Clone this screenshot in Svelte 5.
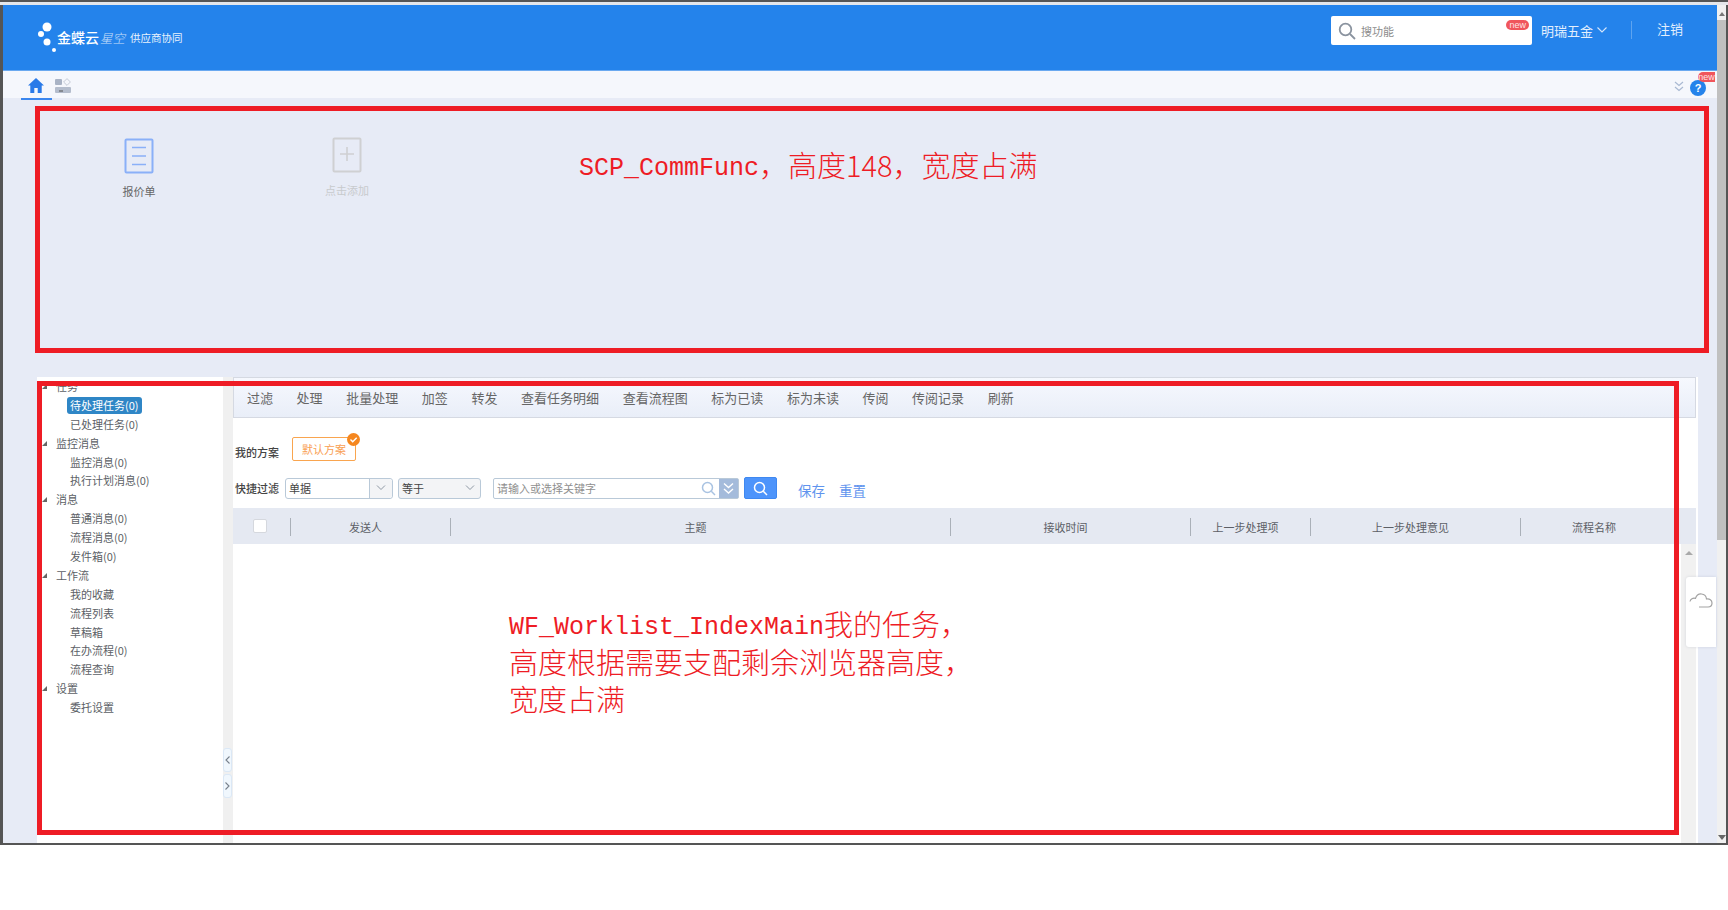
<script>
  const tree = [
    { label: "任务", items: ["待处理任务(0)", "已处理任务(0)"] },
    { label: "监控消息", items: ["监控消息(0)", "执行计划消息(0)"] },
    { label: "消息", items: ["普通消息(0)", "流程消息(0)", "发件箱(0)"] },
    { label: "工作流", items: ["我的收藏", "流程列表", "草稿箱", "在办流程(0)", "流程查询"] },
    { label: "设置", items: ["委托设置"] }
  ];
  const actions = ["过滤", "处理", "批量处理", "加签", "转发", "查看任务明细", "查看流程图", "标为已读", "标为未读", "传阅", "传阅记录", "刷新"];
  const columns = [
    { label: "发送人", width: 160 },
    { label: "主题", width: 500 },
    { label: "接收时间", width: 240 },
    { label: "上一步处理项", width: 120 },
    { label: "上一步处理意见", width: 210 },
    { label: "流程名称", width: 158 }
  ];
</script>

<div class="app">
  <div class="topline"></div>
  <div class="window">
    <div class="page">
      <header class="header">
        <div class="logo">
          <svg width="30" height="36" viewBox="0 0 30 36" fill="#fff">
            <circle cx="16" cy="8" r="4.5" />
            <circle cx="10" cy="15" r="3" />
            <circle cx="16" cy="23" r="3.5" />
            <circle cx="23" cy="31" r="2" />
          </svg>
          <b>金蝶云</b>
          <i>星空</i>
          <span>供应商协同</span>
        </div>
        <div class="search">
          <svg width="18" height="18" viewBox="0 0 18 18" fill="none" stroke="#8a939f" stroke-width="1.8">
            <circle cx="7.5" cy="7.5" r="5.8" />
            <path d="M12 12l5 5" />
          </svg>
          <span>搜功能</span>
          <em class="new">new</em>
        </div>
        <div class="user">
          明瑞五金
          <svg width="10" height="6" viewBox="0 0 10 6" fill="none" stroke="#d5e6fb" stroke-width="1.1"><path d="M.5.5L5 5 9.500 .5" /></svg>
        </div>
        <div class="logout">注销</div>
      </header>

      <nav class="tabs">
        <div class="tab active">
          <svg width="16" height="15" viewBox="0 0 16 15" fill="#2a7ae8">
            <path d="M8 0L0 7.500h2.300V15h4V10h3.400v5h4V7.500H16z" />
          </svg>
        </div>
        <div class="tab">
          <svg width="16" height="15" viewBox="0 0 16 15">
            <rect x="0" y="1" width="7" height="6" rx="1" fill="#a9b3c5" />
            <path d="M12 .6l3.400 3.400L12 7.400 8.600 4z" fill="none" stroke="#c4cad6" />
            <rect x="0" y="9" width="16" height="6" rx="1" fill="#b4bdcd" />
            <path d="M4 13h4" stroke="#555" />
          </svg>
        </div>
        <div class="tab-tools">
          <svg class="fold" width="10" height="11" viewBox="0 0 10 11" fill="none" stroke="#a9b9d2" stroke-width="1.2"><path d="M1 1l4 3.500L9 1M1 6l4 3.500L9 6" /></svg>
          <div class="help">?<em class="new">new</em></div>
        </div>
      </nav>

      <div class="content">
        <section class="quick">
          <div class="entry">
            <svg width="30" height="36" viewBox="0 0 30 36" fill="none" stroke="#8ab0f8" stroke-width="2">
              <rect x="1.500" y="1.500" width="27" height="33" rx="1" />
              <path d="M8 9.500h14M8 18h14M8 26.500h14" stroke-width="1.600" />
            </svg>
            <span>报价单</span>
          </div>
          <div class="entry add">
            <svg width="30" height="36" viewBox="0 0 30 36" fill="none" stroke="#cfd0d2" stroke-width="2">
              <rect x="1.500" y="1.500" width="27" height="33" rx="1" />
              <path d="M8 17h14M15 10v14" stroke-width="1.600" />
            </svg>
            <span>点击添加</span>
          </div>
        </section>

        <section class="work">
          <aside class="sidebar">
            {#each tree as group}
              <div class="group"><i class="arrow"></i>{group.label}</div>
              {#each group.items as item, n}
                <div class="leaf"><span class:selected={group.label === "任务" && n === 0}>{item}</span></div>
              {/each}
            {/each}
          </aside>

          <div class="splitter">
            <button aria-label="收起">
              <svg width="5" height="8" viewBox="0 0 5 8" fill="none" stroke="#77808c" stroke-width="1.100"><path d="M4.500.5L1 4l3.500 3.500" /></svg>
            </button>
            <button aria-label="展开">
              <svg width="5" height="8" viewBox="0 0 5 8" fill="none" stroke="#77808c" stroke-width="1.100"><path d="M.5.5L4 4 .5 7.500" /></svg>
            </button>
          </div>

          <div class="main">
            <div class="toolbar">
              {#each actions as action}
                <span>{action}</span>
              {/each}
            </div>

            <div class="schemes">
              <label for="scheme">我的方案</label>
              <div class="chip" id="scheme">
                默认方案
                <svg class="tick" width="13" height="13" viewBox="0 0 13 13">
                  <circle cx="6.500" cy="6.500" r="6.500" fill="#f5871f" />
                  <path d="M3.500 6.500l2.200 2.200 4-4" fill="none" stroke="#fff" stroke-width="1.400" />
                </svg>
              </div>
            </div>

            <div class="filter">
              <span class="filter-label">快捷过滤</span>
              <div class="field doc">
                <span>单据</span>
                <div class="caret"><svg width="10" height="6" viewBox="0 0 10 6" fill="none" stroke="#8d97a3"><path d="M1 .5l4 4 4-4" /></svg></div>
              </div>
              <div class="field op">
                <span>等于</span>
                <svg width="10" height="6" viewBox="0 0 10 6" fill="none" stroke="#8d97a3"><path d="M1 .5l4 4 4-4" /></svg>
              </div>
              <div class="field keyword">
                <span>请输入或选择关键字</span>
                <svg width="15" height="15" viewBox="0 0 15 15" fill="none" stroke="#a9c3e2" stroke-width="1.500"><circle cx="6.500" cy="6.500" r="5" /><path d="M10.300 10.300L14 14" /></svg>
                <div class="more"><svg width="11" height="13" viewBox="0 0 11 13" fill="none" stroke="#fff" stroke-width="1.400"><path d="M1 1.500l4.500 4 4.500-4M1 7l4.500 4 4.500-4" /></svg></div>
              </div>
              <button class="go" aria-label="搜索">
                <svg width="15" height="15" viewBox="0 0 15 15" fill="none" stroke="#fff" stroke-width="1.500"><circle cx="6.500" cy="6.500" r="5" /><path d="M10.300 10.300L14 14" /></svg>
              </button>
              <a class="link save" href="#save">保存</a>
              <a class="link" href="#reset">重置</a>
            </div>

            <div class="thead">
              <div class="check"><i></i></div>
              {#each columns as col}
                <div class="th" style="width: {col.width}px">{col.label}</div>
              {/each}
            </div>

            <div class="tbody">
              <div class="vbar"><i class="up"></i></div>
            </div>
          </div>
        </section>
      </div>

      <div class="cloud">
        <svg width="24" height="15" viewBox="0 0 24 15" fill="none" stroke="#a3a3a3" stroke-width="1.200">
          <path d="M1 8.500C1.500 6 3.800 4.700 6.500 5.400 7.500 2.200 10 .8 12.500 1c2.800.2 4.700 2.300 5 5 3-.6 5.500 1.200 5.500 4 0 2.500-1.800 4-4 4H10" />
        </svg>
      </div>
    </div>

    <div class="vscroll">
      <i class="up"></i>
      <div class="thumb"></div>
      <i class="down"></i>
    </div>
  </div>

  <div class="mark mark-top"></div>
  <div class="mark mark-bottom"></div>
  <p class="note note-top"><span>SCP_CommFunc</span>，高度148，宽度占满</p>
  <p class="note note-bottom"><span>WF_Worklist_IndexMain</span>我的任务，<br />高度根据需要支配剩余浏览器高度，<br />宽度占满</p>
</div>

<style>
  :global(body) {
    background: #fff;
    overflow: hidden;
  }

  .app {
    position: relative;
    height: 910px;
    font-family: "Noto Sans CJK SC", "Liberation Sans", sans-serif;
    font-size: 11px;
    color: #5c5f66;
  }

  .topline {
    height: 3px;
    border-top: 2px solid #555;
    background: #e4e6ea;
  }

  .window {
    display: flex;
    height: 838px;
    border-left: 3px solid #555;
    border-right: 2px solid #555;
    border-bottom: 2px solid #555;
  }

  .page {
    position: relative;
    flex: 1;
    display: flex;
    flex-direction: column;
    min-width: 0;
    background: #e7ebf6;
  }

  .header {
    height: 66px;
    flex-shrink: 0;
    display: flex;
    align-items: flex-start;
    background: #2483eb;
    color: #e3effd;
    font-size: 13px;
    border-bottom: 1px solid #6aa9f0;
    box-sizing: border-box;
  }

  .logo {
    display: flex;
    align-items: center;
    flex: 1;
    padding: 14px 0 0 28px;
    color: #fff;
  }

  .logo svg {
    margin-right: -4px;
  }

  .logo b {
    font-size: 14px;
    font-weight: 500;
  }

  .logo i {
    font-size: 12.500px;
    margin-left: 1px;
    opacity: 0.75;
    font-weight: 300;
  }

  .logo span {
    font-size: 10.500px;
    margin-left: 5px;
    opacity: 0.9;
  }

  .search {
    position: relative;
    width: 201px;
    height: 29px;
    margin-top: 11px;
    box-sizing: border-box;
    padding-left: 7px;
    display: flex;
    align-items: center;
    gap: 5px;
    background: #fff;
    border-radius: 2px;
    color: #8c8c8c;
    font-size: 11px;
  }

  .new {
    position: absolute;
    background: #f0565c;
    color: #fde5e5;
    border-radius: 6px;
    font-family: "Liberation Sans", sans-serif;
    font-style: normal;
    font-size: 9px;
    line-height: 10px;
    height: 10px;
    padding: 0 3px;
  }

  .search .new {
    top: 4px;
    right: 3px;
  }

  .user {
    display: flex;
    align-items: center;
    gap: 4px;
    height: 18px;
    margin: 16px 0 0 9px;
    width: 90px;
    border-right: 1px solid #5ea4f0;
  }

  .logout {
    margin: 14px 34px 0 25px;
  }

  .tabs {
    height: 27px;
    flex-shrink: 0;
    display: flex;
    padding-left: 18px;
    background: #f5f7fc;
  }

  .tab {
    width: 31px;
    height: 29px;
    box-sizing: border-box;
    padding: 7px 0 0 3px;
    flex-shrink: 0;
    position: relative;
    z-index: 1;
  }

  .tab.active {
    border-bottom: 2px solid #3b86ee;
    padding-left: 7px;
  }

  .tab-tools {
    margin-left: auto;
    display: flex;
    align-items: center;
    gap: 6px;
    padding: 7px 11px 0 0;
  }

  .fold {
    margin-top: -4px;
  }

  .help {
    position: relative;
    width: 16px;
    height: 16px;
    border-radius: 50%;
    background: #2483eb;
    color: #fff;
    font-family: "Liberation Sans", sans-serif;
    font-weight: bold;
    font-size: 11px;
    line-height: 16px;
    text-align: center;
  }

  .help .new {
    top: -8px;
    left: 8px;
    width: 17px;
    padding: 0;
    border-radius: 5px 0 0 5px;
    font-weight: normal;
  }

  .content {
    flex: 1;
    min-height: 0;
    display: flex;
    flex-direction: column;
    padding: 0 19px 0 32px;
  }

  .quick {
    height: 279px;
    flex-shrink: 0;
    box-sizing: border-box;
    display: flex;
    padding-top: 40px;
  }

  .entry {
    width: 208px;
    display: flex;
    flex-direction: column;
    align-items: center;
    gap: 9px;
    color: #666;
  }

  .entry.add {
    color: #c8cacd;
    margin-top: -1px;
  }

  .work {
    flex: 1;
    min-height: 0;
    display: flex;
    margin-left: 2px;
    background: #fff;
  }

  .sidebar {
    width: 186px;
    flex-shrink: 0;
    box-sizing: border-box;
    color: #5c5f66;
    overflow: hidden;
  }

  .group,
  .leaf {
    height: 18.900px;
    line-height: 18.900px;
  }

  .group {
    position: relative;
    padding-left: 19px;
  }

  .arrow {
    position: absolute;
    left: 5px;
    top: 7px;
    width: 0;
    height: 0;
    border-style: solid;
    border-width: 0 0 5px 5px;
    border-color: transparent transparent #666 transparent;
  }

  .leaf {
    padding-left: 30px;
  }

  .leaf span {
    display: inline-block;
    padding: 0 3px;
    line-height: 17px;
    vertical-align: top;
    margin-top: 1px;
  }

  .leaf .selected {
    background: #2f86c6;
    color: #fff;
    border-radius: 3px;
  }

  .splitter {
    width: 10px;
    flex-shrink: 0;
    background: #f0f0f0;
    display: flex;
    flex-direction: column;
    gap: 2px;
    padding-top: 371px;
    box-sizing: border-box;
  }

  .splitter button {
    width: 9px;
    height: 24px;
    padding: 0;
    display: flex;
    align-items: center;
    justify-content: center;
    background: #f0f7fd;
    border: 1px solid #dbe8f6;
    border-radius: 3px;
  }

  .main {
    flex: 1;
    min-width: 0;
    display: flex;
    flex-direction: column;
    margin-right: 2px;
  }

  .toolbar {
    height: 41px;
    flex-shrink: 0;
    box-sizing: border-box;
    display: flex;
    align-items: center;
    gap: 23.600px;
    padding: 0 0 1px 13px;
    background: linear-gradient(#f6f8fe, #e9eef8);
    border: 1px solid #d5d9e2;
    font-size: 13px;
    color: #666;
  }

  .schemes {
    display: flex;
    height: 24px;
    margin-top: 19px;
    padding-left: 2px;
    color: #444;
    font-weight: 500;
  }

  .schemes label {
    width: 57px;
    padding-top: 6px;
    line-height: 18px;
  }

  .chip {
    position: relative;
    width: 64px;
    box-sizing: border-box;
    border: 1px solid #f9a54f;
    border-radius: 2px;
    text-align: center;
    line-height: 22px;
    color: #f9a054;
    font-weight: 400;
  }

  .tick {
    position: absolute;
    top: -5px;
    right: -5px;
  }

  .filter {
    display: flex;
    align-items: center;
    height: 22px;
    margin-top: 16px;
    padding-left: 2px;
  }

  .filter-label {
    width: 50px;
    color: #444;
    font-weight: 500;
  }

  .field {
    height: 21px;
    box-sizing: border-box;
    display: flex;
    align-items: center;
    border: 1px solid #b9c9d8;
    border-radius: 3px;
    padding-left: 3px;
    color: #444;
  }

  .doc {
    width: 108px;
  }

  .doc span {
    flex: 1;
  }

  .caret {
    width: 22px;
    height: 100%;
    display: flex;
    align-items: center;
    justify-content: center;
    background: #f3f4f6;
    border-left: 1px solid #b9c9d8;
    border-radius: 0 3px 3px 0;
  }

  .op {
    width: 83px;
    margin-left: 5px;
    justify-content: space-between;
    padding-right: 5px;
    background: #f3f4f6;
  }

  .keyword {
    width: 246px;
    margin-left: 12px;
    border-radius: 2px;
    color: #8f8f8f;
  }

  .keyword span {
    flex: 1;
  }

  .more {
    width: 19px;
    height: 100%;
    margin-left: 3px;
    display: flex;
    align-items: center;
    justify-content: center;
    background: #a4bbdb;
  }

  .go {
    width: 33px;
    height: 22px;
    margin-left: 5px;
    padding: 0;
    display: flex;
    align-items: center;
    justify-content: center;
    background: #4d94fb;
    border: 1px solid #3f88f0;
    border-radius: 2px;
  }

  .link {
    margin-left: 14px;
    padding-top: 3px;
    font-size: 13.500px;
    color: #5f94ee;
    text-decoration: none;
  }

  .link.save {
    margin-left: 21px;
  }

  .thead {
    height: 36px;
    flex-shrink: 0;
    margin-top: 9px;
    display: flex;
    align-items: center;
    background: #e5e9f2;
  }

  .check {
    width: 57px;
    flex-shrink: 0;
    box-sizing: border-box;
    padding-left: 20px;
  }

  .check i {
    display: block;
    width: 14px;
    height: 14px;
    box-sizing: border-box;
    background: #fff;
    border: 1px solid #d5d8de;
    border-radius: 2px;
  }

  .th {
    flex-shrink: 0;
    height: 18px;
    box-sizing: border-box;
    padding-right: 10px;
    margin-top: 1px;
    line-height: 18px;
    text-align: center;
    border-left: 1px solid #aab0b8;
  }

  .th:last-child {
    border-right: 1px solid #d5d8de;
  }

  .tbody {
    flex: 1;
    min-height: 0;
    display: flex;
    justify-content: flex-end;
  }

  .vbar {
    width: 15px;
    background: #f1f1f1;
    display: flex;
    justify-content: center;
  }

  .up,
  .down {
    display: block;
    width: 0;
    height: 0;
    border-style: solid;
    border-color: transparent;
  }

  .up {
    border-width: 0 4px 4px 4px;
    border-bottom-color: #a9a9a9;
  }

  .vbar .up {
    margin-top: 7px;
  }

  .cloud {
    position: absolute;
    right: 1px;
    top: 572px;
    width: 30px;
    height: 70px;
    box-sizing: border-box;
    padding: 16px 0 0 3px;
    background: #fff;
    border-radius: 3px 0 0 3px;
    box-shadow: 0 0 3px rgba(120, 130, 150, 0.25);
  }

  .vscroll {
    width: 9px;
    flex-shrink: 0;
    display: flex;
    flex-direction: column;
    align-items: center;
    background: #f0f0f0;
  }

  .vscroll .up {
    margin-top: 7px;
    border-width: 0 3.500px 4px 3.500px;
    border-bottom-color: #777;
  }

  .thumb {
    width: 9px;
    height: 520px;
    margin-top: 4px;
    background: #c0c0c0;
  }

  .down {
    margin-top: auto;
    margin-bottom: 3px;
    border-width: 5px 4px 0 4px;
    border-top-color: #666;
  }

  .mark {
    position: absolute;
    box-sizing: border-box;
    border: 5px solid #ee1c25;
  }

  .mark-top {
    left: 35px;
    top: 106px;
    width: 1674px;
    height: 247px;
  }

  .mark-bottom {
    left: 37px;
    top: 381px;
    width: 1642px;
    height: 454px;
  }

  .note {
    position: absolute;
    margin: 0;
    color: #ee1c25;
    font-size: 29px;
    font-weight: 300;
    line-height: 37.500px;
    white-space: nowrap;
  }

  .note span {
    font-family: "Liberation Mono", monospace;
    font-size: 25px;
    line-height: 1;
    font-weight: normal;
    vertical-align: 2px;
  }

  .note-top {
    left: 579px;
    top: 146px;
  }

  .note-bottom {
    left: 509px;
    top: 605px;
  }
</style>
